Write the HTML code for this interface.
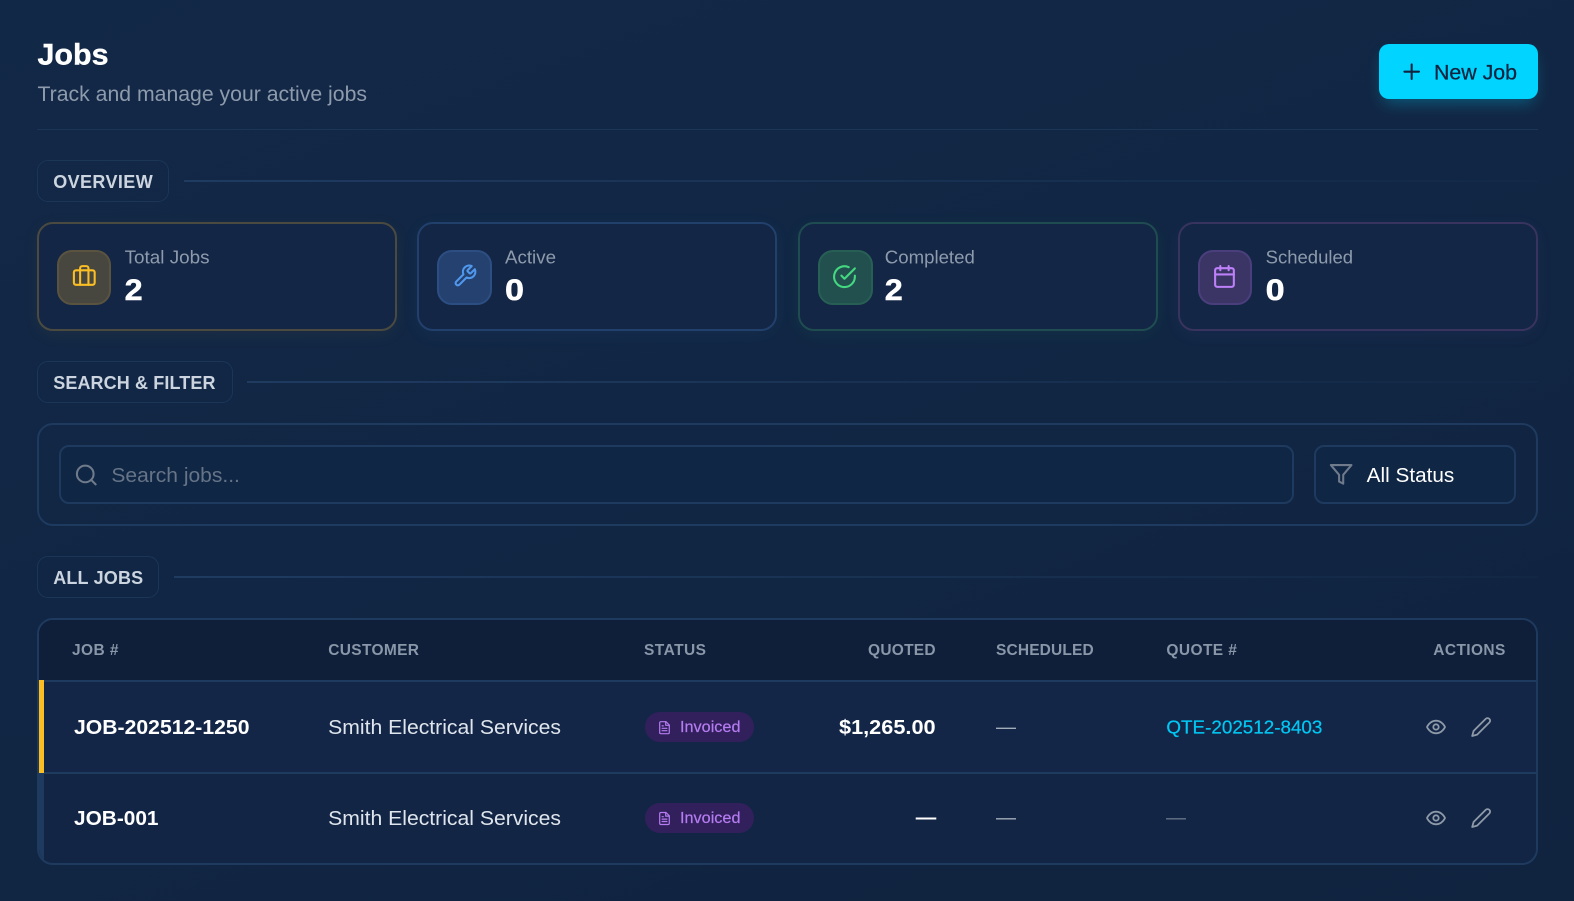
<!DOCTYPE html>
<html lang="en">
<head>
<meta charset="utf-8">
<title>Jobs</title>
<style>
html,body{margin:0;padding:0;width:1574px;height:901px;overflow:hidden;background:#112744}
body{position:relative;background:linear-gradient(160deg,#122847 0%,#112643 55%,#10233f 100%);font-family:"Liberation Sans",sans-serif}
.b{position:absolute;box-sizing:border-box}
.pill{height:42px;border:1.5px solid #1c3658;border-radius:11px}
.ln{height:2px;background:linear-gradient(90deg,#1f3b60,rgba(31,59,96,.1))}
.card{top:222px;height:108.5px;width:360px;border:2px solid;border-radius:16px}
.ic{top:249.5px;width:54.5px;height:55px;border:2px solid;border-radius:15px}
svg.o{position:absolute;left:0;top:0}
text{font-family:"Liberation Sans",sans-serif}
.g{fill:none;stroke-width:2;stroke-linecap:round;stroke-linejoin:round}
</style>
</head>
<body>
<div class="b" style="left:37px;top:129px;width:1501px;height:1px;background:#1c3658"></div>
<div class="b" style="left:1379px;top:44px;width:159px;height:55px;border-radius:10px;background:#00d4ff;box-shadow:0 8px 16px -4px rgba(0,212,255,.3)"></div>

<div class="b pill" style="left:37px;top:160px;width:132px"></div>
<div class="b ln" style="left:184px;top:180px;width:1354px"></div>

<div class="b card" style="left:37px;border-color:#4b4a40;background:#132645;box-shadow:0 4px 18px rgba(255,190,40,.05)"></div>
<div class="b card" style="left:417px;border-color:#21406c;background:#132645;box-shadow:0 4px 18px rgba(80,150,240,.06)"></div>
<div class="b card" style="left:798px;border-color:#1f4c50;background:#132645;box-shadow:0 4px 18px rgba(60,220,130,.06)"></div>
<div class="b card" style="left:1178px;border-color:#38335f;background:#132645;box-shadow:0 4px 18px rgba(170,110,250,.05)"></div>
<div class="b ic" style="left:56.8px;background:#47463f;border-color:#5a5340"></div>
<div class="b ic" style="left:437px;background:#244170;border-color:#2d4e82"></div>
<div class="b ic" style="left:818px;background:#22504f;border-color:#285f55"></div>
<div class="b ic" style="left:1197.7px;background:#3b3566;border-color:#4a3f7c"></div>

<div class="b pill" style="left:37px;top:361px;width:195.5px"></div>
<div class="b ln" style="left:247px;top:381px;width:1291px"></div>

<div class="b" style="left:37px;top:423px;width:1501px;height:102.5px;border:2px solid #1e3a5f;border-radius:16px"></div>
<div class="b" style="left:59px;top:445px;width:1235px;height:58.5px;border:2px solid #1e3a5f;border-radius:10px;background:#102645"></div>
<div class="b" style="left:1314px;top:445px;width:202px;height:58.5px;border:2px solid #1e3a5f;border-radius:10px;background:#102645"></div>

<div class="b pill" style="left:37px;top:556px;width:122px"></div>
<div class="b ln" style="left:174px;top:576px;width:1364px"></div>

<div class="b" style="left:37px;top:618px;width:1501px;height:246.5px;border:2px solid #1e3a5f;border-radius:16px;overflow:hidden;background:#122545">
  <div class="b" style="left:0;top:0;width:100%;height:60px;background:#0f1e39"></div>
  <div class="b" style="left:0;top:60px;width:100%;height:1.5px;background:#1e3a5f"></div>
  <div class="b" style="left:5px;top:61.5px;right:0;height:90.5px;background:#142647"></div>
  <div class="b" style="left:0;top:152px;width:100%;height:1.5px;background:#1e3a5f"></div>
  <div class="b" style="left:0;top:60px;width:5px;height:93px;background:#fbbf24"></div>
  <div class="b" style="left:0;top:153px;width:5px;height:92px;background:#1e3a5f"></div>
</div>
<div class="b" style="left:645px;top:712px;width:108.5px;height:30px;border-radius:15px;background:#32205c"></div>
<div class="b" style="left:645px;top:803px;width:108.5px;height:30px;border-radius:15px;background:#32205c"></div>

<svg class="o" width="1574" height="901" viewBox="0 0 1574 901" xmlns="http://www.w3.org/2000/svg">
  <text x="37.5" y="64.5" font-size="29.5" font-weight="700" fill="#fff" stroke="#fff" stroke-width=".4" textLength="71" lengthAdjust="spacingAndGlyphs">Jobs</text>
  <text x="37.5" y="101" font-size="21" fill="#8e9bac" textLength="329.5" lengthAdjust="spacingAndGlyphs">Track and manage your active jobs</text>
  <text x="1434" y="79.5" font-size="21" fill="#10233f" stroke="#10233f" stroke-width=".25" textLength="83" lengthAdjust="spacingAndGlyphs">New Job</text>
  <g class="g" stroke="#10233f" transform="translate(1399.2,59.2) scale(1.04)"><path d="M5 12h14M12 5v14"/></g>

  <text x="53.2" y="188" font-size="18" font-weight="700" fill="#ccd5df" textLength="99.5" lengthAdjust="spacing">OVERVIEW</text>
  <text x="53.2" y="389" font-size="18" font-weight="700" fill="#ccd5df" textLength="162.3" lengthAdjust="spacing">SEARCH &amp; FILTER</text>
  <text x="53.2" y="584" font-size="18" font-weight="700" fill="#ccd5df" textLength="90" lengthAdjust="spacing">ALL JOBS</text>

  <text x="124.6" y="263.5" font-size="18.5" fill="#8e9bac" textLength="85" lengthAdjust="spacingAndGlyphs">Total Jobs</text>
  <text x="124.6" y="300" font-size="30" font-weight="700" fill="#fff" stroke="#fff" stroke-width=".5" textLength="18" lengthAdjust="spacingAndGlyphs">2</text>
  <text x="505" y="263.5" font-size="18.5" fill="#8e9bac" textLength="51" lengthAdjust="spacingAndGlyphs">Active</text>
  <text x="505" y="300" font-size="30" font-weight="700" fill="#fff" stroke="#fff" stroke-width=".5" textLength="19" lengthAdjust="spacingAndGlyphs">0</text>
  <text x="884.8" y="263.5" font-size="18.5" fill="#8e9bac" textLength="90" lengthAdjust="spacingAndGlyphs">Completed</text>
  <text x="884.8" y="300" font-size="30" font-weight="700" fill="#fff" stroke="#fff" stroke-width=".5" textLength="18" lengthAdjust="spacingAndGlyphs">2</text>
  <text x="1265.6" y="263.5" font-size="18.5" fill="#8e9bac" textLength="87.5" lengthAdjust="spacingAndGlyphs">Scheduled</text>
  <text x="1265.6" y="300" font-size="30" font-weight="700" fill="#fff" stroke="#fff" stroke-width=".5" textLength="19" lengthAdjust="spacingAndGlyphs">0</text>

  <g class="g" stroke="#fbbf24" transform="translate(71.8,263) scale(1.04)"><rect x="2" y="7" width="20" height="14" rx="2"/><path d="M16 21V5a2 2 0 0 0-2-2h-4a2 2 0 0 0-2 2v16"/></g>
  <g class="g" stroke="#5098ee" transform="translate(452.5,263.5) scale(1.04)"><path d="M14.7 6.3a1 1 0 0 0 0 1.4l1.6 1.6a1 1 0 0 0 1.4 0l3.77-3.77a6 6 0 0 1-7.94 7.94l-6.91 6.91a2.12 2.12 0 0 1-3-3l6.91-6.91a6 6 0 0 1 7.94-7.94l-3.76 3.76z"/></g>
  <g class="g" stroke="#44d880" transform="translate(832,264.2) scale(1.04)"><path d="M22 11.08V12a10 10 0 1 1-5.93-9.14"/><path d="m9 11 3 3L22 4"/></g>
  <g class="g" stroke="#bd80f8" transform="translate(1212,264) scale(1.04)"><rect x="3" y="4" width="18" height="18" rx="2"/><path d="M16 2v4M8 2v4M3 10h18"/></g>

  <g class="g" stroke="#6f7b8b" transform="translate(73.8,462.5) scale(1.04)"><circle cx="11" cy="11" r="8"/><path d="M21 21l-4.35-4.35"/></g>
  <text x="111.4" y="482" font-size="20.5" fill="#667487" textLength="128.5" lengthAdjust="spacingAndGlyphs">Search jobs...</text>
  <g class="g" stroke="#6f7b8b" transform="translate(1328.8,462) scale(1.03)"><path d="M22 3H2l8 9.46V19l4 2v-8.54L22 3z"/></g>
  <text x="1366.7" y="482" font-size="20.5" fill="#fff" textLength="87.6" lengthAdjust="spacingAndGlyphs">All Status</text>

  <g font-size="15.5" font-weight="700" fill="#8a97a8">
    <text x="72" y="655" textLength="46.5" lengthAdjust="spacing">JOB #</text>
    <text x="328.2" y="655" textLength="90.8" lengthAdjust="spacing">CUSTOMER</text>
    <text x="644" y="655" textLength="62" lengthAdjust="spacing">STATUS</text>
    <text x="868" y="655" textLength="67.6" lengthAdjust="spacing">QUOTED</text>
    <text x="996" y="655" textLength="97.7" lengthAdjust="spacing">SCHEDULED</text>
    <text x="1166.4" y="655" textLength="70.5" lengthAdjust="spacing">QUOTE #</text>
    <text x="1433.3" y="655" textLength="72" lengthAdjust="spacing">ACTIONS</text>
  </g>

  <text x="74" y="734" font-size="20.5" font-weight="700" fill="#fff" textLength="175.5" lengthAdjust="spacingAndGlyphs">JOB-202512-1250</text>
  <text x="74" y="824.8" font-size="20.5" font-weight="700" fill="#fff" textLength="84.5" lengthAdjust="spacingAndGlyphs">JOB-001</text>
  <text x="328.2" y="734" font-size="20.5" fill="#dfe5ec" textLength="232.8" lengthAdjust="spacingAndGlyphs">Smith Electrical Services</text>
  <text x="328.2" y="824.8" font-size="20.5" fill="#dfe5ec" textLength="232.8" lengthAdjust="spacingAndGlyphs">Smith Electrical Services</text>

  <g class="g" stroke="#b47cf0" transform="translate(657.3,720.5) scale(.6)"><path d="M14.5 2H6a2 2 0 0 0-2 2v16a2 2 0 0 0 2 2h12a2 2 0 0 0 2-2V7.5L14.5 2z"/><path d="M14 2v6h6M16 13H8M16 17H8M10 9H8"/></g>
  <g class="g" stroke="#b47cf0" transform="translate(657.3,811.3) scale(.6)"><path d="M14.5 2H6a2 2 0 0 0-2 2v16a2 2 0 0 0 2 2h12a2 2 0 0 0 2-2V7.5L14.5 2z"/><path d="M14 2v6h6M16 13H8M16 17H8M10 9H8"/></g>
  <text x="680" y="732" font-size="15.5" fill="#b47cf0" stroke="#b47cf0" stroke-width=".2" textLength="60.5" lengthAdjust="spacingAndGlyphs">Invoiced</text>
  <text x="680" y="822.8" font-size="15.5" fill="#b47cf0" stroke="#b47cf0" stroke-width=".2" textLength="60.5" lengthAdjust="spacingAndGlyphs">Invoiced</text>

  <text x="839" y="734" font-size="20.5" font-weight="700" fill="#fff" textLength="96.6" lengthAdjust="spacingAndGlyphs">$1,265.00</text>
  <text x="915.8" y="824" font-size="20.5" font-weight="700" fill="#fff" textLength="20.5" lengthAdjust="spacingAndGlyphs">—</text>
  <text x="996" y="733.3" font-size="20" fill="#a3adba" textLength="20" lengthAdjust="spacingAndGlyphs">—</text>
  <text x="996" y="824" font-size="20" fill="#a3adba" textLength="20" lengthAdjust="spacingAndGlyphs">—</text>
  <text x="1166.4" y="733.5" font-size="18.5" fill="#00c8f5" stroke="#00c8f5" stroke-width=".2" textLength="156" lengthAdjust="spacingAndGlyphs">QTE-202512-8403</text>
  <text x="1166" y="824" font-size="20" fill="#667487" textLength="20" lengthAdjust="spacingAndGlyphs">—</text>

  <g class="g" stroke="#8f9aa8" transform="translate(1425.2,716.2) scale(.9)"><path d="M2 12s3-7 10-7 10 7 10 7-3 7-10 7-10-7-10-7Z"/><circle cx="12" cy="12" r="3"/></g>
  <g class="g" stroke="#8f9aa8" transform="translate(1425.2,807.2) scale(.9)"><path d="M2 12s3-7 10-7 10 7 10 7-3 7-10 7-10-7-10-7Z"/><circle cx="12" cy="12" r="3"/></g>
  <g class="g" stroke="#8f9aa8" transform="translate(1470.4,716.2) scale(.9)"><path d="M17 3a2.83 2.83 0 1 1 4 4L7.5 20.5 2 22l1.5-5.5L17 3z"/></g>
  <g class="g" stroke="#8f9aa8" transform="translate(1470.4,807.2) scale(.9)"><path d="M17 3a2.83 2.83 0 1 1 4 4L7.5 20.5 2 22l1.5-5.5L17 3z"/></g>
</svg>
</body>
</html>
